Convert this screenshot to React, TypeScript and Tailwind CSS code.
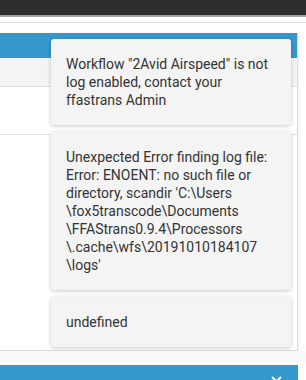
import React from 'react';

export default function App() {
  return (
    <div className="relative h-[380px] w-[306px] overflow-hidden bg-white font-['Roboto',sans-serif]">
      <div className="h-[15px] bg-[#2e2e2e]" />
      <div className="h-[2px] bg-[#a3a3a3]" />
      <div className="h-[6px] border-b border-[#e3e3e3]" />
      <div className="h-[10px]" />

      <div className="w-[298px] border-r border-b border-[#dcdcdc] shadow-[0_1px_3px_rgba(0,0,0,0.12)]">
        <div className="h-[25px] bg-[#3598cc]" />
        <div className="h-[29px] border-b border-[#dedede] bg-[#f4f4f4]" />
        <div className="h-[48px] border-b border-[#e3e3e3]" />
        <div className="h-[215px]" />
      </div>

      <div className="h-[14px] bg-[#fafafa]" />
      <div className="flex h-[15px] w-[298px] items-start justify-end overflow-hidden bg-[#3598cc] pr-[16px]">
        <svg width="11" height="11" viewBox="0 0 11 11" className="mt-[11px] shrink-0">
          <path d="M1 1 L10 10 M10 1 L1 10" stroke="#fff" strokeWidth="2" fill="none" />
        </svg>
      </div>

      <div className="absolute top-[39px] right-[15px] flex w-[240px] flex-col gap-[7px]">
        <div className="rounded-[3px] bg-[#f4f4f4] px-[15px] py-[16px] text-[14px] leading-[18px] text-[#333] shadow-[0_1px_4px_rgba(0,0,0,0.22)]">
          Workflow "2Avid Airspeed" is not log enabled, contact your ffastrans Admin
        </div>
        <div className="rounded-[3px] bg-[#f4f4f4] px-[15px] py-[16px] text-[14px] leading-[18px] text-[#333] shadow-[0_1px_4px_rgba(0,0,0,0.22)]">
          Unexpected Error finding log file: Error: ENOENT: no such file or directory, scandir 'C:\Users
          <br />
          \fox5transcode\Documents
          <br />
          \FFAStrans0.9.4\Processors
          <br />
          \.cache\wfs\20191010184107
          <br />
          \logs'
        </div>
        <div className="rounded-[3px] bg-[#f4f4f4] px-[15px] py-[16px] text-[14px] leading-[18px] text-[#333] shadow-[0_1px_4px_rgba(0,0,0,0.22)]">
          undefined
        </div>
      </div>
    </div>
  );
}
